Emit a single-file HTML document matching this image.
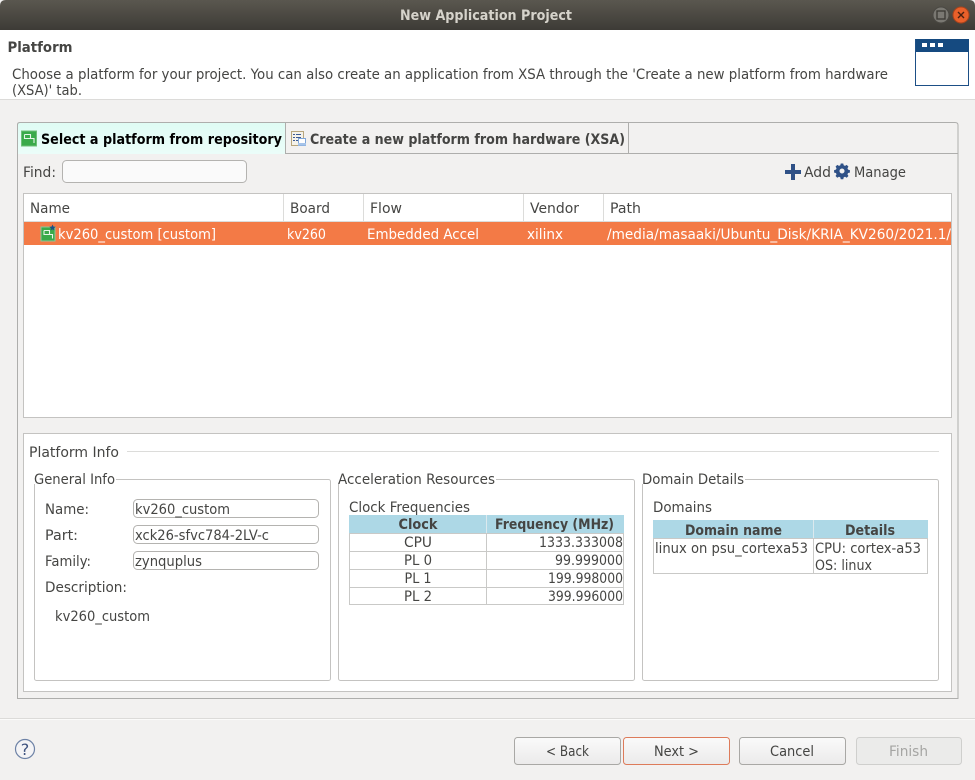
<!DOCTYPE html>
<html><head><meta charset="utf-8"><title>New Application Project</title>
<style>
html,body{margin:0;padding:0;width:975px;height:780px;overflow:hidden;background:#f2f1f0}
svg{display:block}
text{font-family:"DejaVu Sans","Liberation Sans",sans-serif;font-size:14px;fill:#454543;white-space:pre}
.b{font-weight:bold}
.w{fill:#fff}
</style></head><body>
<svg width="975" height="780" viewBox="0 0 975 780" xmlns="http://www.w3.org/2000/svg">
<defs>
<linearGradient id="tb" x1="0" y1="0" x2="0" y2="1"><stop offset="0" stop-color="#5a574f"/><stop offset="1" stop-color="#3d3b36"/></linearGradient>
<linearGradient id="btn" x1="0" y1="0" x2="0" y2="1"><stop offset="0" stop-color="#fafafa"/><stop offset="1" stop-color="#ebeaea"/></linearGradient>
<linearGradient id="tab" x1="0" y1="0" x2="0" y2="1"><stop offset="0" stop-color="#dffcf4"/><stop offset="1" stop-color="#ebfdf9"/></linearGradient>
</defs>
<rect width="975" height="780" fill="#f2f1f0"/>

<!-- title bar -->
<path d="M0 30V6Q0 0 6 0H969Q975 0 975 6V30Z" fill="url(#tb)"/>
<text x="400" y="20" class="b" textLength="172" lengthAdjust="spacingAndGlyphs" style="fill:#d6d3cb">New Application Project</text>
<circle cx="941" cy="15" r="8" fill="#7a7872" stroke="#4a4843"/>
<rect x="937" y="11" width="8" height="8" fill="none" stroke="#3a3833" stroke-width="1.3"/>
<circle cx="961" cy="15" r="8" fill="#e9602a" stroke="#a8431c"/>
<path d="M958 12L964 18M964 12L958 18" stroke="#4a2010" stroke-width="1.4"/>

<!-- header -->
<rect y="30" width="975" height="69" fill="#fff"/>
<rect y="99" width="975" height="1" fill="#dcdbd9"/>
<text x="7.5" y="52" class="b" textLength="65" lengthAdjust="spacingAndGlyphs">Platform</text>
<text x="12" y="79" textLength="876" lengthAdjust="spacingAndGlyphs">Choose a platform for your project. You can also create an application from XSA through the 'Create a new platform from hardware</text>
<text x="12" y="95" textLength="70" lengthAdjust="spacingAndGlyphs">(XSA)' tab.</text>
<rect x="915.5" y="39.5" width="53" height="46" fill="#fff" stroke="#1d4f86"/>
<rect x="916" y="39" width="53" height="13" fill="#154a80"/>
<rect x="922" y="43" width="5" height="4" fill="#fff"/><rect x="930" y="43" width="5" height="4" fill="#fff"/><rect x="938" y="43" width="5" height="4" fill="#fff"/>

<!-- tab folder -->
<path d="M17.5 698.5V125Q17.5 122.5 20 122.5H955Q958 122.5 958 125V698.5Z" fill="#f2f1f0" stroke="#aeaeac"/>
<rect x="18" y="153" width="940" height="1" fill="#aeaeac"/>
<path d="M17.5 153.5V125Q17.5 122.5 20 122.5H285.5V153.5" fill="url(#tab)" stroke="#aeaeac"/>
<rect x="18" y="153" width="267" height="1" fill="#ebfdf9"/>
<rect x="628" y="123" width="1" height="30" fill="#aeaeac"/>
<rect x="21.5" y="131" width="15" height="15" fill="#3aaa4a" stroke="#6fbf78"/>
<path d="M24.5 134.5H30.5V138.5H34V143M24.5 134.5V138.5H30.5" fill="none" stroke="#e6f5e8" stroke-width="1.1"/>
<text x="41" y="144" class="b" textLength="241" lengthAdjust="spacingAndGlyphs" style="fill:#000">Select a platform from repository</text>
<rect x="291.5" y="131.5" width="12" height="14" fill="#f4f2ea" stroke="#b8a67c"/>
<path d="M293 134h2v1h-2zM293 137h2v1h-2zM293 140h2v1h-2zM296 134h5v1h-5zM296 137h5v1h-5zM296 140h3v1h-3z" fill="#3c5a94"/>
<rect x="298.5" y="138.5" width="7" height="7" fill="#fff" stroke="#7fa6d8"/>
<rect x="298" y="143" width="8" height="2.5" fill="#a6c4ea"/>
<text x="310" y="144" class="b" textLength="315" lengthAdjust="spacingAndGlyphs">Create a new platform from hardware (XSA)</text>

<!-- find row -->
<text x="23" y="177" textLength="33" lengthAdjust="spacingAndGlyphs">Find:</text>
<rect x="62.5" y="160.5" width="184" height="22" rx="4" fill="#fafafa" stroke="#b4b3b0"/>
<path d="M791 164h4v6h6v4h-6v6h-4v-6h-6v-4h6z" fill="#2f5187"/>
<text x="804" y="177" textLength="27" lengthAdjust="spacingAndGlyphs">Add</text>
<path transform="translate(842 171) scale(.84) translate(-842 -172.5)" d="M840.5 163.5h3l.5 2.2 1.6.7 2-1.2 2.1 2.1-1.2 2 .7 1.6 2.2.5v3l-2.2.5-.7 1.6 1.2 2-2.1 2.1-2-1.2-1.6.7-.5 2.2h-3l-.5-2.2-1.6-.7-2 1.2-2.1-2.1 1.2-2-.7-1.6-2.2-.5v-3l2.2-.5.7-1.6-1.2-2 2.1-2.1 2 1.2 1.6-.7zM842 169.5a3 3 0 1 0 .01 0z" fill="#2f5187" fill-rule="evenodd"/>
<text x="854" y="177" textLength="52" lengthAdjust="spacingAndGlyphs">Manage</text>

<!-- table -->
<rect x="23.5" y="193.5" width="928" height="224" fill="#fff" stroke="#c4c3c1"/>
<rect x="283" y="194" width="1" height="27" fill="#dcdcda"/><rect x="363" y="194" width="1" height="27" fill="#dcdcda"/><rect x="523" y="194" width="1" height="27" fill="#dcdcda"/><rect x="603" y="194" width="1" height="27" fill="#dcdcda"/>
<rect x="24" y="221" width="927" height="1" fill="#dcdcda"/>
<text x="30" y="213" textLength="40" lengthAdjust="spacingAndGlyphs">Name</text>
<text x="290" y="213" textLength="40" lengthAdjust="spacingAndGlyphs">Board</text>
<text x="370" y="213" textLength="32" lengthAdjust="spacingAndGlyphs">Flow</text>
<text x="530" y="213" textLength="49" lengthAdjust="spacingAndGlyphs">Vendor</text>
<text x="610" y="213" textLength="31" lengthAdjust="spacingAndGlyphs">Path</text>
<rect x="24" y="222" width="927" height="23" fill="#f37a46"/>
<rect x="41" y="227" width="14" height="14" fill="#3aaa4a" stroke="#8cc79a"/>
<path d="M44 230.5H49.5V234.5H52.5V238.5M44 230.5V234.5H49.5" fill="none" stroke="#e6f5e8" stroke-width="1.1"/>
<path d="M52.5 224.5l1 2.1 2.2.2-1.7 1.5.6 2.2-2.1-1.2-2.1 1.2.6-2.2-1.7-1.5 2.2-.2z" fill="#1d4f86"/>
<text x="58" y="239" class="w" textLength="158" lengthAdjust="spacingAndGlyphs">kv260_custom [custom]</text>
<text x="287" y="239" class="w" textLength="39" lengthAdjust="spacingAndGlyphs">kv260</text>
<text x="367" y="239" class="w" textLength="112" lengthAdjust="spacingAndGlyphs">Embedded Accel</text>
<text x="527" y="239" class="w" textLength="36" lengthAdjust="spacingAndGlyphs">xilinx</text>
<text x="607" y="239" class="w" textLength="344" lengthAdjust="spacingAndGlyphs">/media/masaaki/Ubuntu_Disk/KRIA_KV260/2021.1/</text>

<!-- platform info -->
<rect x="23.5" y="433.5" width="928" height="258" fill="#fff" stroke="#c4c3c1"/>
<text x="29" y="457" textLength="90" lengthAdjust="spacingAndGlyphs">Platform Info</text>
<rect x="127" y="451" width="812" height="1" fill="#dcdcda"/>

<rect x="34.5" y="479.5" width="296" height="201" rx="2" fill="#fff" stroke="#c4c3c1"/>
<rect x="33" y="474" width="83" height="10" fill="#fff"/>
<text x="34" y="484" textLength="81" lengthAdjust="spacingAndGlyphs">General Info</text>
<text x="45" y="514" textLength="44" lengthAdjust="spacingAndGlyphs">Name:</text>
<text x="45" y="540" textLength="33" lengthAdjust="spacingAndGlyphs">Part:</text>
<text x="45" y="566" textLength="46" lengthAdjust="spacingAndGlyphs">Family:</text>
<text x="45" y="592" textLength="82" lengthAdjust="spacingAndGlyphs">Description:</text>
<rect x="133.5" y="499.5" width="185" height="18" rx="4" fill="#fff" stroke="#b4b3b0"/>
<rect x="133.5" y="525.5" width="185" height="18" rx="4" fill="#fff" stroke="#b4b3b0"/>
<rect x="133.5" y="551.5" width="185" height="18" rx="4" fill="#fff" stroke="#b4b3b0"/>
<text x="135" y="514" textLength="95" lengthAdjust="spacingAndGlyphs">kv260_custom</text>
<text x="135" y="540" textLength="134" lengthAdjust="spacingAndGlyphs">xck26-sfvc784-2LV-c</text>
<text x="135" y="566" textLength="67" lengthAdjust="spacingAndGlyphs">zynquplus</text>
<text x="55" y="621" textLength="95" lengthAdjust="spacingAndGlyphs">kv260_custom</text>

<rect x="338.5" y="479.5" width="296" height="201" rx="2" fill="#fff" stroke="#c4c3c1"/>
<rect x="337" y="474" width="159" height="10" fill="#fff"/>
<text x="338" y="484" textLength="157" lengthAdjust="spacingAndGlyphs">Acceleration Resources</text>
<text x="349" y="512" textLength="121" lengthAdjust="spacingAndGlyphs">Clock Frequencies</text>
<rect x="349" y="515" width="275" height="18" fill="#add8e6"/>
<rect x="486" y="515" width="1" height="18" fill="#dbe9ee"/>
<path d="M349.5 533.5H623.5V604.5H349.5ZM349 551.5H624M349 569.5H624M349 587.5H624M486.5 533V605" fill="none" stroke="#c9c9c7"/>
<text x="418" y="529" class="b" text-anchor="middle" textLength="39" lengthAdjust="spacingAndGlyphs">Clock</text>
<text x="495" y="529" class="b" textLength="119" lengthAdjust="spacingAndGlyphs">Frequency (MHz)</text>
<text x="418" y="547" text-anchor="middle" textLength="28" lengthAdjust="spacingAndGlyphs">CPU</text>
<text x="418" y="565" text-anchor="middle" textLength="28" lengthAdjust="spacingAndGlyphs">PL 0</text>
<text x="418" y="583" text-anchor="middle" textLength="27" lengthAdjust="spacingAndGlyphs">PL 1</text>
<text x="418" y="601" text-anchor="middle" textLength="28" lengthAdjust="spacingAndGlyphs">PL 2</text>
<text x="539" y="547" textLength="84" lengthAdjust="spacingAndGlyphs">1333.333008</text>
<text x="555" y="565" textLength="68" lengthAdjust="spacingAndGlyphs">99.999000</text>
<text x="548" y="583" textLength="75" lengthAdjust="spacingAndGlyphs">199.998000</text>
<text x="548" y="601" textLength="75" lengthAdjust="spacingAndGlyphs">399.996000</text>

<rect x="642.5" y="479.5" width="296" height="201" rx="2" fill="#fff" stroke="#c4c3c1"/>
<rect x="641" y="474" width="104" height="10" fill="#fff"/>
<text x="642" y="484" textLength="102" lengthAdjust="spacingAndGlyphs">Domain Details</text>
<text x="653" y="512" textLength="59" lengthAdjust="spacingAndGlyphs">Domains</text>
<rect x="653" y="520" width="275" height="18" fill="#add8e6"/>
<rect x="813" y="520" width="1" height="18" fill="#dbe9ee"/>
<path d="M653.5 538.5H927.5V573.5H653.5ZM813.5 538V574" fill="none" stroke="#c9c9c7"/>
<text x="685" y="535" class="b" textLength="97" lengthAdjust="spacingAndGlyphs">Domain name</text>
<text x="845" y="535" class="b" textLength="50" lengthAdjust="spacingAndGlyphs">Details</text>
<text x="655" y="553" textLength="153" lengthAdjust="spacingAndGlyphs">linux on psu_cortexa53</text>
<text x="815" y="553" textLength="106" lengthAdjust="spacingAndGlyphs">CPU: cortex-a53</text>
<text x="815" y="570" textLength="57" lengthAdjust="spacingAndGlyphs">OS: linux</text>

<!-- footer -->
<rect y="718" width="975" height="1" fill="#dcdbd9"/>
<rect y="719" width="975" height="1" fill="#fbfbfa"/>
<circle cx="25" cy="749" r="9.5" fill="#f4f4f6" stroke="#6d82a6" stroke-width="1.2"/>
<text x="25" y="755" text-anchor="middle" style="font-size:16px;fill:#3f5480">?</text>

<rect x="514.5" y="737.5" width="106" height="27" rx="3" fill="url(#btn)" stroke="#a9a8a5"/>
<rect x="623.5" y="737.5" width="106" height="27" rx="3" fill="url(#btn)" stroke="#dd7b5a"/>
<rect x="739.5" y="737.5" width="106" height="27" rx="3" fill="url(#btn)" stroke="#a9a8a5"/>
<rect x="856.5" y="737.5" width="105" height="27" rx="3" fill="#ebebea" stroke="#cfcfcd"/>
<text x="546" y="756" textLength="43" lengthAdjust="spacingAndGlyphs">&lt; Back</text>
<text x="654" y="756" textLength="45" lengthAdjust="spacingAndGlyphs">Next &gt;</text>
<text x="770" y="756" textLength="44" lengthAdjust="spacingAndGlyphs">Cancel</text>
<text x="889" y="756" textLength="39" lengthAdjust="spacingAndGlyphs" style="fill:#a5a5a3">Finish</text>
</svg>
</body></html>
